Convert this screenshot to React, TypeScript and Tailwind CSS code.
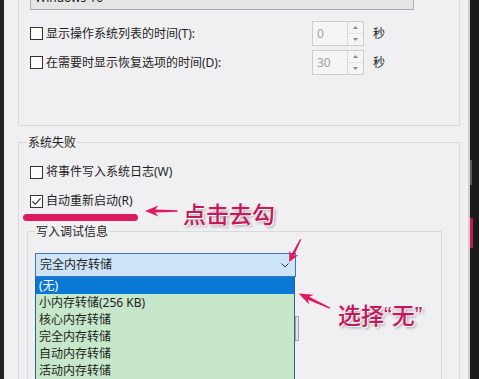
import React from 'react';

const FONT = "font-['Noto_Sans','Noto_Sans_CJK_SC',sans-serif]";

function CheckBox({ checked }: { checked?: boolean }) {
  return (
    <span className="w-[13px] h-[13px] border border-[#333] bg-white flex items-center justify-center shrink-0">
      {checked && (
        <svg width="11" height="11" viewBox="0 0 11 11">
          <path d="M1.5 5.5 L4.3 8.3 L9.6 2.4" fill="none" stroke="#222" strokeWidth="1.1" />
        </svg>
      )}
    </span>
  );
}

function Spinner({ value }: { value: string }) {
  return (
    <div className="w-[52px] h-[25px] border border-[#cdcdcd] bg-[#f5f5f5] flex">
      <span className="flex-1 pl-[4px] text-[#a0a0a0] leading-[23px]">{value}</span>
      <div className="w-[16px] border-l border-[#d8d8d8] flex flex-col">
        <span className="flex-1 flex items-center justify-center border-b border-[#e2e2e2]">
          <svg width="5" height="3" viewBox="0 0 5 3">
            <path d="M0 3 L2.5 0 L5 3Z" fill="#8a8a8a" />
          </svg>
        </span>
        <span className="flex-1 flex items-center justify-center">
          <svg width="5" height="3" viewBox="0 0 5 3">
            <path d="M0 0 L2.5 3 L5 0Z" fill="#8a8a8a" />
          </svg>
        </span>
      </div>
    </div>
  );
}

function Arrow({ className }: { className: string }) {
  return (
    <svg className={`absolute ${className}`} viewBox="0 0 32 12" preserveAspectRatio="none">
      <path
        d="M0 6 L13 0.5 L10 4.4 L31.5 5.3 L31.5 6.7 L10 7.6 L13 11.5 Z"
        fill="#e0195f"
      />
    </svg>
  );
}

const Note = "absolute text-[23px] leading-[26px] text-[#c6175c] font-['Liberation_Sans','Noto_Sans_CJK_SC',sans-serif] font-medium [text-shadow:1px_1px_0_#fff,2px_2px_3px_rgba(0,0,0,0.35)]";

export default function App() {
  const items = ['小内存转储(256 KB)', '核心内存转储', '完全内存转储', '自动内存转储', '活动内存转储'];
  return (
    <div className={`relative w-[479px] h-[379px] overflow-hidden flex bg-[#141414] text-[12px] text-[#1e1e1e] ${FONT}`}>
      {/* left edge */}
      <div className="w-[4px] bg-[#232323]" />

      {/* dialog body */}
      <div className="w-[466px] bg-[#f0eff2] border-r-[2px] border-[#cfcfcf] flex flex-col">
        {/* group 1 */}
        <div className="ml-[14px] w-[442px] h-[131px] border-x border-b border-[#dadada] flex flex-col">
          <div className="ml-[11px] w-[384px] h-[24px] -mt-[14px] bg-[#e5e5e5] border border-[#adadad] flex items-center justify-between px-[4px]">
            <span className="leading-[22px]">Windows 10</span>
            <svg width="8" height="5" viewBox="0 0 8 5">
              <path d="M0.5 0.5 L4 4 L7.5 0.5" fill="none" stroke="#444" />
            </svg>
          </div>

          <div className="mt-[11px] h-[25px] pl-[11px] flex items-center">
            <CheckBox />
            <span className="ml-[3px] w-[266px]">显示操作系统列表的时间(T):</span>
            <Spinner value="0" />
            <span className="ml-[9px]">秒</span>
          </div>
          <div className="mt-[4px] h-[25px] pl-[11px] flex items-center">
            <CheckBox />
            <span className="ml-[3px] w-[266px]">在需要时显示恢复选项的时间(D):</span>
            <Spinner value="30" />
            <span className="ml-[9px]">秒</span>
          </div>
        </div>

        {/* group 2 */}
        <div className="mt-[16px] ml-[14px] w-[442px] flex-1 border-x border-t border-[#dadada] flex flex-col">
          <span className="-mt-[8px] ml-[8px] w-fit px-[1px] leading-[16px] bg-[#f0eff2]">系统失败</span>

          <div className="mt-[11px] h-[20px] pl-[11px] flex items-center gap-[3px]">
            <CheckBox />
            <span>将事件写入系统日志(W)</span>
          </div>
          <div className="mt-[9px] h-[20px] pl-[11px] flex items-center gap-[3px]">
            <CheckBox checked />
            <span>自动重新启动(R)</span>
          </div>

          {/* group 3 */}
          <div className="mt-[20px] ml-[8px] w-[415px] flex-1 border-x border-t border-[#dadada] flex flex-col">
            <span className="-mt-[8px] ml-[7px] w-fit px-[1px] leading-[16px] bg-[#f0eff2]">写入调试信息</span>

            <div className="mt-[13px] ml-[7px] w-[261px] h-[24px] bg-[#cde4f7] border border-[#3a78b5] flex items-center justify-between pl-[4px] pr-[6px]">
              <span>完全内存转储</span>
              <svg width="8" height="5" viewBox="0 0 8 5">
                <path d="M0.5 0.5 L4 4 L7.5 0.5" fill="none" stroke="#333" />
              </svg>
            </div>
            <div className="ml-[7px] w-[260px] flex-1 bg-[#c6e7c9] border-x border-[#2b5f96] flex flex-col">
              <div className="h-[17px] leading-[17px] pl-[3px] bg-[#0a78d7] text-white">(无)</div>
              {items.map((t) => (
                <div key={t} className="h-[17px] leading-[17px] pl-[3px]">
                  {t}
                </div>
              ))}
            </div>
          </div>
        </div>
      </div>

      {/* right edge */}
      <div className="flex-1 flex flex-col bg-[#1a1a1a]">
        <div className="h-[160px]" />
        <div className="h-[25px] w-[2px] bg-[#5a5a5a]" />
        <div className="h-[33px]" />
        <div className="h-[30px] w-[3px] bg-[#c2185b]" />
      </div>

      {/* control peeking behind the list */}
      <div className="absolute left-[295px] top-[316px] w-[4px] h-[25px] border border-[#a6a6a6] bg-[#e4e4e4]" />

      {/* annotations */}
      <div className="absolute left-[23px] top-[214px] w-[115px] h-[7px] rounded-full bg-[#dc1a5e]" />
      <Arrow className="left-[145px] top-[205px] w-[33px] h-[12px]" />
      <span className={`${Note} left-[183px] top-[202px]`}>点击去勾</span>
      <Arrow className="left-[282px] top-[245px] w-[26px] h-[11px] rotate-[-63deg]" />
      <Arrow className="left-[297px] top-[295px] w-[35px] h-[12px] rotate-[25deg]" />
      <span className={`${Note} left-[338px] top-[303px]`}>选择“无”</span>
    </div>
  );
}
